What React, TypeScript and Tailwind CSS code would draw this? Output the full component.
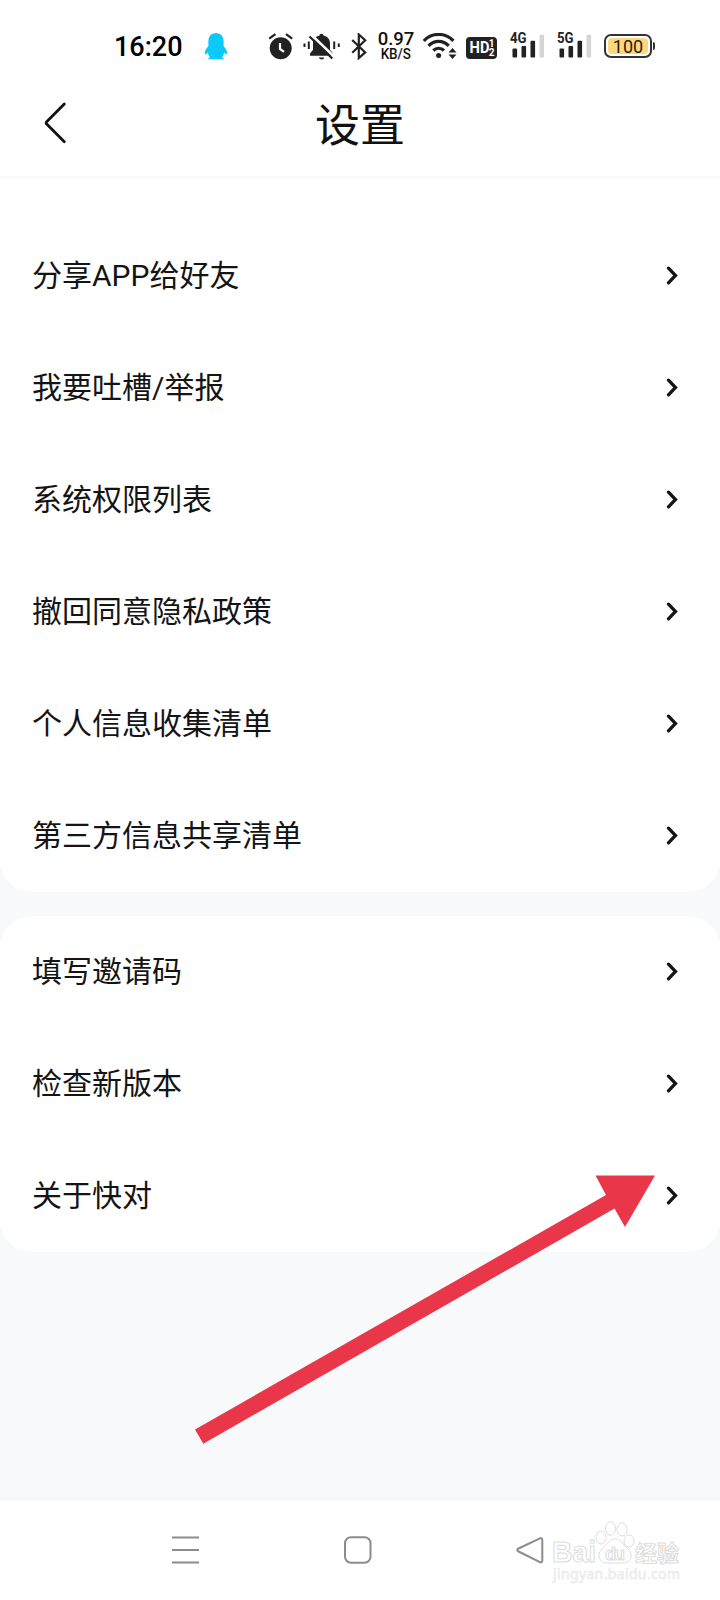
import { FC } from "react";

type TSettingItem = {
  key: string;
  label: string;
};

const SHARE_ITEMS: TSettingItem[] = [
  { key: "share", label: "分享APP给好友" },
  { key: "feedback", label: "我要吐槽/举报" },
  { key: "permissions", label: "系统权限列表" },
  { key: "revoke", label: "撤回同意隐私政策" },
  { key: "collected", label: "个人信息收集清单" },
  { key: "third-party", label: "第三方信息共享清单" },
];

const ABOUT_ITEMS: TSettingItem[] = [
  { key: "invite", label: "填写邀请码" },
  { key: "version", label: "检查新版本" },
  { key: "about", label: "关于快对" },
];

// status bar icons
const PenguinIcon: FC = () => (
  <svg className="ml-[22px] h-7 w-6 shrink-0" viewBox="0 0 24 28" fill="#0cc8fb">
    <path d="M12 0C7.300 0 4.400 3.600 4.400 8v5C2.600 15 .8 17.800.8 20.300c0 1.200.6 1.400 1.500.6l1.600-1.500c.3 2.200 1.100 3.900 2.300 5-1.400.2-2.200.8-2.200 1.800h16c0-1-.8-1.600-2.200-1.800 1.200-1.100 2-2.800 2.300-5l1.600 1.500c.9.800 1.500.6 1.500-.6 0-2.500-1.800-5.300-3.600-7.300V8c0-4.400-2.900-8-7.600-8z" />
  </svg>
);

const AlarmIcon: FC = () => (
  <svg className="ml-[40px] h-7 w-[26px] shrink-0" viewBox="0 0 26 28" fill="none">
    <circle cx="12.700" cy="15.200" r="11" fill="#222" />
    <path d="M1.200 5.700 7.400 1.100M24.200 5.700 18 1.100" stroke="#222" strokeWidth="2.200" />
    <path d="M12 10v6l4 2.800" stroke="#fff" strokeWidth="2.200" />
  </svg>
);

const MuteIcon: FC = () => (
  <svg className="ml-[9px] h-7 w-[37px] shrink-0" viewBox="0 0 37 28" fill="none">
    <path
      d="M16.500 2.500c0-1 .8-1.800 2-1.800s2 .8 2 1.800c4 .9 6.500 3.800 6.500 8v6.300l3 3.700v2.300H7v-2.300l3-3.700v-6.300c0-4.200 2.500-7.100 6.500-8z"
      fill="#222"
    />
    <path d="M15.800 24.500h5.600c-.4 1.300-1.500 2-2.800 2s-2.400-.7-2.800-2z" fill="#222" />
    <path d="m8.500 2 23 22" stroke="#fff" strokeWidth="2.600" />
    <path d="m6.500 3.500 22.800 22" stroke="#222" strokeWidth="2.300" />
    <path d="M5.800 8.500v7.500M31.200 8.500v7.500M1.500 10.500v3.500M35.800 10.500v3.500" stroke="#222" strokeWidth="2" />
  </svg>
);

const BluetoothIcon: FC = () => (
  <svg className="ml-[11px] h-7 w-4 shrink-0" viewBox="0 0 16 28" fill="none" stroke="#222" strokeWidth="2.200">
    <path d="m1.200 7 13 12.400L7.800 25V1.500l6.400 5.700L1.200 19.700" />
  </svg>
);

const WifiIcon: FC = () => (
  <svg className="ml-2 h-7 w-[34px] shrink-0" viewBox="0 0 34 28" fill="none" stroke="#222">
    <path d="M.8 7.900C8.600-.7 22.600-.7 30.400 7.900" strokeWidth="3.200" />
    <path d="M5.500 12.800c5.800-6 14.400-6 20.200 0" strokeWidth="3.200" />
    <path d="M10.300 17.500c3-3 7.700-3 10.700 0" strokeWidth="3.200" />
    <circle cx="15.600" cy="22.500" r="2.500" fill="#222" stroke="none" />
    <path d="m29.500 15 4 4.500h-8zM29.500 26l4-4.500h-8z" fill="#222" stroke="none" />
  </svg>
);

const SignalIcon: FC<{ label: string; className: string }> = ({ label, className }) => (
  <div className={`relative h-7 w-[36px] shrink-0 ${className}`}>
    <svg className="h-7 w-[36px]" viewBox="0 0 36 28" fill="#222">
      <rect x="2.500" y="15.500" width="4.600" height="9" rx="1" />
      <rect x="11.500" y="13" width="4.600" height="11.500" rx="1" />
      <rect x="20.500" y="7.800" width="4.600" height="16.700" rx="1" />
      <rect x="29.500" y="1.800" width="4.600" height="22.700" rx="1" fill="#d5d5d5" />
    </svg>
    <span className="absolute left-0 -top-px origin-left scale-x-[0.88] bg-white text-[15px] font-bold leading-[13px] tracking-[-0.200px] text-[#222]">
      {label}
    </span>
  </div>
);

const StatusBar: FC = () => (
  <div className="flex h-[92px] items-center pl-[114px] pt-px">
    <span className="w-[68px] shrink-0 text-[27px] font-medium leading-7 text-black">16:20</span>
    <PenguinIcon />
    <AlarmIcon />
    <MuteIcon />
    <BluetoothIcon />
    <div className="ml-[10px] flex w-[38px] shrink-0 flex-col items-center font-medium text-[#111]">
      <span className="text-[18.500px] leading-[15px]">0.97</span>
      <span className="origin-center scale-x-[0.96] text-[14px] leading-[15px]">KB/S</span>
    </div>
    <WifiIcon />
    <div className="ml-[9px] mt-[2px] flex h-[22px] w-[31px] shrink-0 items-center justify-center rounded-[4px] bg-[#222] font-bold text-white">
      <span className="-mx-px scale-x-[0.86] text-[17px] leading-none">HD</span>
      <span className="-ml-px flex flex-col text-[10px] leading-[9px]">
        <span>1</span>
        <span>2</span>
      </span>
    </div>
    <SignalIcon label="4G" className="ml-[13px]" />
    <SignalIcon label="5G" className="ml-[11px]" />
    <div className="-mt-px ml-[11px] flex shrink-0 items-center">
      <div className="flex h-6 w-[48px] rounded-[7px] border-2 border-[#333] p-[2px]">
        <div className="flex flex-1 items-center justify-center rounded-[4px] bg-[#fdd77e] pt-px text-[18px] leading-none text-[#2b210c]">
          100
        </div>
      </div>
      <div className="ml-px h-2 w-[2px] rounded-r-sm bg-[#333]" />
    </div>
  </div>
);

const Header: FC = () => (
  <div className="grid h-[86px] grid-cols-3 items-center border-b-2 border-[#f9f9f9] pb-[22px]">
    <svg className="ml-[42px] h-[42px] w-7" viewBox="0 0 28 42" fill="none" stroke="#111" strokeWidth="2.800">
      <path d="M22.300 2 4.700 19.700c-.8.800-.8 1.600 0 2.400L22.300 39.800" strokeLinecap="round" strokeLinejoin="round" />
    </svg>
    <h1 className="pt-2 text-center text-[45px] leading-[52px] text-[#111]">设置</h1>
  </div>
);

const SettingRow: FC<{ item: TSettingItem }> = ({ item }) => (
  <li className="flex h-28 items-center justify-between pl-8 pr-[41px]">
    <span className="text-[30px] leading-10 text-[#141414]">{item.label}</span>
    <svg className="h-5 w-[14px]" viewBox="0 0 14 20" fill="none" stroke="#141414" strokeWidth="3.300">
      <path d="m3.500 2.200 7 7.300-7 7.300" strokeLinecap="round" />
    </svg>
  </li>
);

const Watermark: FC = () => (
  <svg
    className="absolute left-[548px] top-[16px] h-[72px] w-[140px]"
    viewBox="0 0 140 72"
    fill="#fff"
    stroke="#dcdcdc"
    strokeWidth="1"
  >
    <text
      x="4"
      y="45"
      fontFamily="Liberation Sans, sans-serif"
      fontSize="29"
      fontWeight="700"
      textLength="44"
      lengthAdjust="spacingAndGlyphs"
    >
      Bai
    </text>
    <ellipse cx="53" cy="20.500" rx="5" ry="6.500" />
    <ellipse cx="62.500" cy="11.500" rx="5" ry="6.700" />
    <ellipse cx="74" cy="12.500" rx="5" ry="6.500" />
    <ellipse cx="81" cy="24" rx="5" ry="6" />
    <path d="M67 22c-6 0-7.500 5-11.500 8.500-4.500 4-5.500 7-4 11 2 5.500 8.500 4.500 15.500 4.500s13.500 1 15.500-4.500c1.500-4 .5-7-4-11C74.500 27 73 22 67 22z" />
    <text x="57" y="43" fontFamily="Liberation Sans, sans-serif" fontSize="18" fontWeight="700" textLength="20">
      du
    </text>
    <text x="87" y="44" fontFamily="Noto Sans CJK SC, sans-serif" fontSize="22" fontWeight="700">
      经验
    </text>
    <text
      x="5"
      y="62"
      fontFamily="Noto Sans, sans-serif"
      fontSize="14"
      fill="#f7f7f7"
      stroke="#e8e8e8"
      strokeWidth="0.600"
      textLength="127"
    >
      jingyan.baidu.com
    </text>
  </svg>
);

const NavigationBar: FC = () => (
  <div className="relative flex h-[99px] items-center bg-white pb-px pl-[170px]">
    <svg className="h-8 w-8" viewBox="0 0 32 32" stroke="#8c8c8c" strokeWidth="2">
      <path d="M2 3.500h27M2 16h27M2 28.500h27" />
    </svg>
    <svg className="ml-[140px] h-8 w-8" viewBox="0 0 32 32" fill="none" stroke="#8c8c8c" strokeWidth="2">
      <rect x="3" y="3.200" width="25.500" height="25.500" rx="6" />
    </svg>
    <svg className="ml-[140px] h-8 w-8" viewBox="0 0 32 32" fill="none" stroke="#8c8c8c" strokeWidth="2">
      <path d="M26 4.300 4.500 14.500c-1.600.8-1.600 2.200 0 3L26 28.200c1.200.5 2.300-.2 2.300-1.500v-21c0-1.300-1.100-1.900-2.300-1.400z" />
    </svg>
    <Watermark />
  </div>
);

const App: FC = () => (
  <div className="relative flex h-[1600px] w-[720px] flex-col overflow-hidden bg-[#f7f9fb] font-['Roboto','Noto_Sans_CJK_SC',sans-serif]">
    <div className="bg-white">
      <StatusBar />
      <Header />
    </div>

    <ul className="rounded-b-[32px] bg-white pt-[42px]">
      {SHARE_ITEMS.map((item) => (
        <SettingRow key={item.key} item={item} />
      ))}
    </ul>

    <ul className="mt-6 rounded-[32px] bg-white">
      {ABOUT_ITEMS.map((item) => (
        <SettingRow key={item.key} item={item} />
      ))}
    </ul>

    <div className="flex-1" />
    <NavigationBar />

    {/* pointer to the about row */}
    <svg className="pointer-events-none absolute left-[190px] top-[1170px] h-[280px] w-[470px]" viewBox="190 1170 470 280">
      <path d="m195 1429.500 411-234.500-10.500-19.500H655l-30 51.500-10.500-18.500-411.200 235.200z" fill="#e93648" />
    </svg>
  </div>
);

export default App;
